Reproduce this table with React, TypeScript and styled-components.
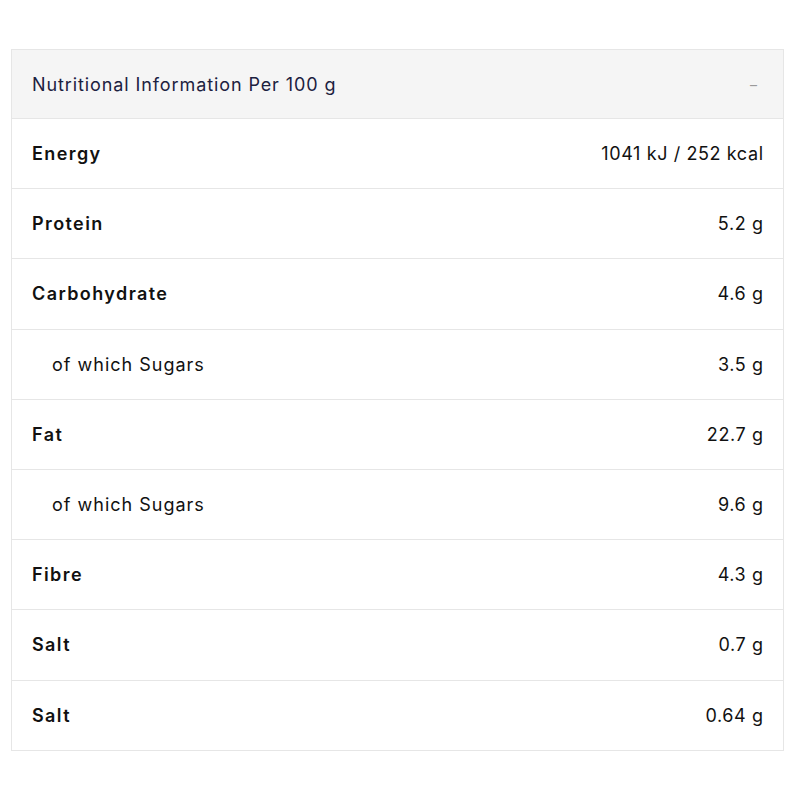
import styled, { createGlobalStyle } from "styled-components";

type NutrientRow = {
  label: string;
  value: string;
  sub?: boolean;
};

const rows: NutrientRow[] = [
  { label: "Energy", value: "1041 kJ / 252 kcal" },
  { label: "Protein", value: "5.2 g" },
  { label: "Carbohydrate", value: "4.6 g" },
  { label: "of which Sugars", value: "3.5 g", sub: true },
  { label: "Fat", value: "22.7 g" },
  { label: "of which Sugars", value: "9.6 g", sub: true },
  { label: "Fibre", value: "4.3 g" },
  { label: "Salt", value: "0.7 g" },
  { label: "Salt", value: "0.64 g" },
];

const GlobalStyle = createGlobalStyle`
  body {
    margin: 0;
    background: #ffffff;
    font-family: Inter, "Noto Sans", sans-serif;
  }
`;

const App = () => {
  return (
    <>
      <GlobalStyle />
      <StyledPage>
        <StyledPanel>
          <StyledHeader>
            <StyledTitle>Nutritional Information Per 100 g</StyledTitle>
            <StyledToggle>–</StyledToggle>
          </StyledHeader>
          {rows.map((row, idx) => (
            <StyledRow key={`row-${idx}`}>
              <StyledLabel $sub={row.sub}>{row.label}</StyledLabel>
              <StyledValue>{row.value}</StyledValue>
            </StyledRow>
          ))}
        </StyledPanel>
      </StyledPage>
    </>
  );
};

export default App;

const StyledPage = styled.div`
  padding: 49px 16px 0 11px;
`;

const StyledPanel = styled.div`
  width: 773px;
  box-sizing: border-box;
  border: 1px solid #e6e6e6;
`;

const StyledHeader = styled.div`
  height: 68px;
  display: flex;
  align-items: center;
  justify-content: space-between;
  padding: 0 20px;
  background: #f5f5f5;
`;

const StyledTitle = styled.span`
  font-size: 18px;
  color: #1c2140;
  letter-spacing: 0.9px;
`;

const StyledToggle = styled.span`
  font-size: 14px;
  color: #9a9a9a;
  padding-right: 6px;
`;

const StyledRow = styled.div`
  height: 69.2px;
  display: flex;
  align-items: center;
  justify-content: space-between;
  padding: 0 20px;
  border-top: 1px solid #e6e6e6;
`;

const StyledLabel = styled.span<{ $sub?: boolean }>`
  font-size: 18px;
  color: #111111;
  font-weight: ${({ $sub }) => ($sub ? 400 : 600)};
  letter-spacing: ${({ $sub }) => ($sub ? "1px" : "1.4px")};
  padding-left: ${({ $sub }) => ($sub ? "20px" : "0")};
`;

const StyledValue = styled.span`
  font-size: 18px;
  color: #111111;
  letter-spacing: 0.6px;
  margin-right: -0.6px;
`;
